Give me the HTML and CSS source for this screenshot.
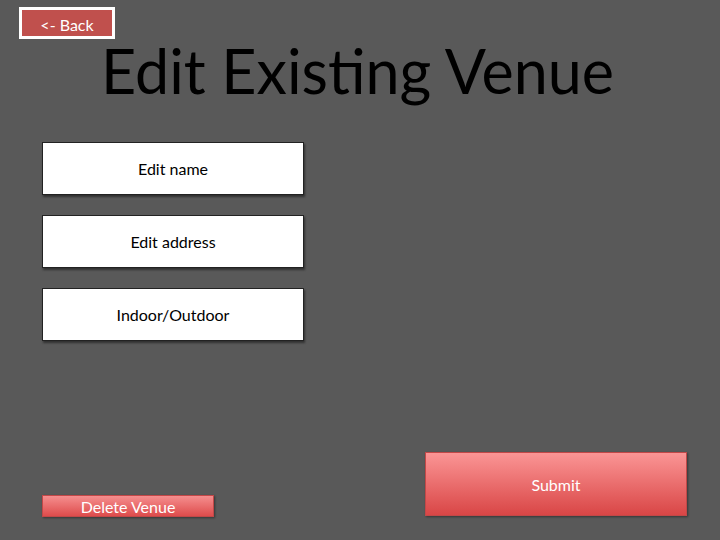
FILE: index.html
```html
<!DOCTYPE html>
<html>
<head>
<meta charset="utf-8">
<link rel="stylesheet" href="styles.css">
</head>
<body>
<div class="page">
  <div class="top">
    <button class="back"><span class="back-inner">&lt;- Back</span></button>
  </div>
  <h1 class="title">Edit Existing Venue</h1>
  <div class="fields">
    <div class="field">Edit name</div>
    <div class="field">Edit address</div>
    <div class="field">Indoor/Outdoor</div>
  </div>
  <div class="bottom">
    <div class="delete">Delete Venue</div>
    <div class="submit">Submit</div>
  </div>
</div>
</body>
</html>
```
FILE: styles.css
```css
html, body {
  margin: 0;
  padding: 0;
  background: #595959;
}
.page {
  width: 720px;
  height: 540px;
  display: flex;
  flex-direction: column;
  font-family: Lato, "Open Sans", sans-serif;
  box-sizing: border-box;
}
.top {
  padding: 7px 0 0 19px;
  height: 32px;
}
.back {
  display: block;
  width: 96px;
  height: 32px;
  padding: 0;
  margin: 0;
  border: 3px solid #ffffff;
  background: #c0504d;
  box-sizing: border-box;
  font-family: inherit;
  cursor: pointer;
}
.back-inner {
  display: block;
  color: #ffffff;
  font-size: 16px;
  line-height: 26px;
  padding-top: 2px;
}
.title {
  margin: 0;
  font-weight: normal;
  font-size: 61px;
  line-height: 70px;
  height: 70px;
  color: #000000;
  text-align: center;
  margin-top: -3px;
  padding-right: 5px;
}
.fields {
  display: flex;
  flex-direction: column;
  gap: 20px;
  margin: 36px 0 0 42px;
}
.field {
  width: 262px;
  height: 53px;
  box-sizing: border-box;
  background: #ffffff;
  border: 1px solid #222222;
  box-shadow: 1px 2px 2px rgba(0,0,0,0.45);
  display: flex;
  align-items: center;
  justify-content: center;
  font-size: 16px;
  color: #000000;
}
.bottom {
  margin-top: auto;
  display: flex;
  justify-content: space-between;
  align-items: flex-end;
  padding: 0 33px 23px 42px;
}
.delete {
  width: 172px;
  height: 22px;
  box-sizing: border-box;
  background: linear-gradient(#f58e8e, #de4c4c);
  border: 1px solid #c24848;
  box-shadow: 1px 1px 2px rgba(0,0,0,0.4);
  color: #ffffff;
  font-size: 16px;
  display: flex;
  align-items: center;
  justify-content: center;
  line-height: 1;
  padding-top: 2px;
}
.submit {
  width: 262px;
  height: 64px;
  margin-bottom: 1px;
  box-sizing: border-box;
  background: linear-gradient(#fb9595, #d94646);
  border: 1px solid #c24848;
  box-shadow: 1px 1px 2px rgba(0,0,0,0.4);
  color: #ffffff;
  font-size: 16px;
  display: flex;
  align-items: center;
  justify-content: center;
}
```
